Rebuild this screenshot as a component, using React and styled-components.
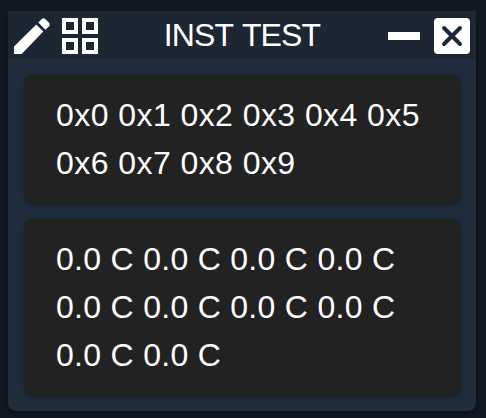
import React from 'react';
import styled, { createGlobalStyle } from 'styled-components';

const GlobalStyle = createGlobalStyle`
  * { box-sizing: border-box; }
  body {
    margin: 0;
    background: #121922;
    color: #fff;
    font-family: "Liberation Sans", Arial, sans-serif;
    font-size: 32px;
    line-height: 48px;
    overflow: hidden;
  }
`;

const Page = styled.main`
  height: 418px;
  padding: 11px 10px 7px 8px;
`;

const Panel = styled.section`
  height: 400px;
  background: #202d3d;
  border-radius: 0 0 8px 8px;
  box-shadow: 0 2px 4px rgba(0, 0, 0, 0.4);
`;

const Header = styled.header`
  display: flex;
  align-items: center;
  height: 48px;
  padding: 2px 6px 0;
  background: #1c2733;
`;

const Title = styled.h1`
  flex: 1;
  margin: -2px 0 0;
  font-size: 32px;
  font-weight: 400;
  line-height: 48px;
  letter-spacing: -0.9px;
  word-spacing: 2px;
  text-align: center;
`;

const IconButton = styled.button`
  display: flex;
  width: 36px;
  height: 36px;
  margin: 0 ${(p) => p.$after || 0}px 0 0;
  padding: 0;
  border: 0;
  background: none;
  color: #fff;
`;

const Cards = styled.div`
  display: flex;
  flex-direction: column;
  gap: 16px;
  padding: 16px;
`;

const Card = styled.div`
  padding: 16px 32px;
  border-radius: 8px;
  background: #222;
  box-shadow: 0 2px 5px rgba(0, 0, 0, 0.3);
  letter-spacing: ${(p) => p.$tracking}px;
`;

const Value = styled.span`
  white-space: nowrap;
`;

const addresses = Array.from({ length: 10 }, (_, i) => `0x${i}`);
const temperatures = Array.from({ length: 10 }, () => '0.0 C');

function ValueCard({ values, tracking }) {
  return (
    <Card $tracking={tracking}>
      {values.map((value, i) => (
        <React.Fragment key={i}>
          <Value>{value}</Value>{' '}
        </React.Fragment>
      ))}
    </Card>
  );
}

export default function App() {
  return (
    <>
      <GlobalStyle />
      <Page>
        <Panel>
          <Header>
            <IconButton $after={12} aria-label="Edit">
              <svg width="36" height="36" viewBox="0 0 36 36" fill="currentColor">
                <path d="M0 28.4 22.3 6.5 29.3 13.4 7.7 36H0zM24.3 4.5 27.6 1.2Q29.5-.7 31.4 1.2L34.8 4.6Q36.7 6.5 34.8 8.4L31.3 11.8z" />
              </svg>
            </IconButton>
            <IconButton aria-label="Layout">
              <svg width="36" height="36" viewBox="0 0 36 36" fill="none" stroke="currentColor" strokeWidth="4">
                <path d="M2 2h12v12H2zM22 2h12v12H22zM2 22h12v12H2zM22 22h12v12H22z" />
              </svg>
            </IconButton>
            <Title>INST TEST</Title>
            <IconButton $after={12} aria-label="Minimize">
              <svg width="36" height="36" viewBox="0 0 36 36" fill="currentColor">
                <path d="M2 14h32v8H2z" />
              </svg>
            </IconButton>
            <IconButton aria-label="Close">
              <svg width="36" height="36" viewBox="0 0 36 36">
                <rect width="36" height="36" rx="4" fill="currentColor" />
                <path d="M10 10 26 26M26 10 10 26" stroke="#1c2733" strokeWidth="3.9" strokeLinecap="round" />
              </svg>
            </IconButton>
          </Header>
          <Cards>
            <ValueCard values={addresses} tracking={0.43} />
            <ValueCard values={temperatures} tracking={0.29} />
          </Cards>
        </Panel>
      </Page>
    </>
  );
}
